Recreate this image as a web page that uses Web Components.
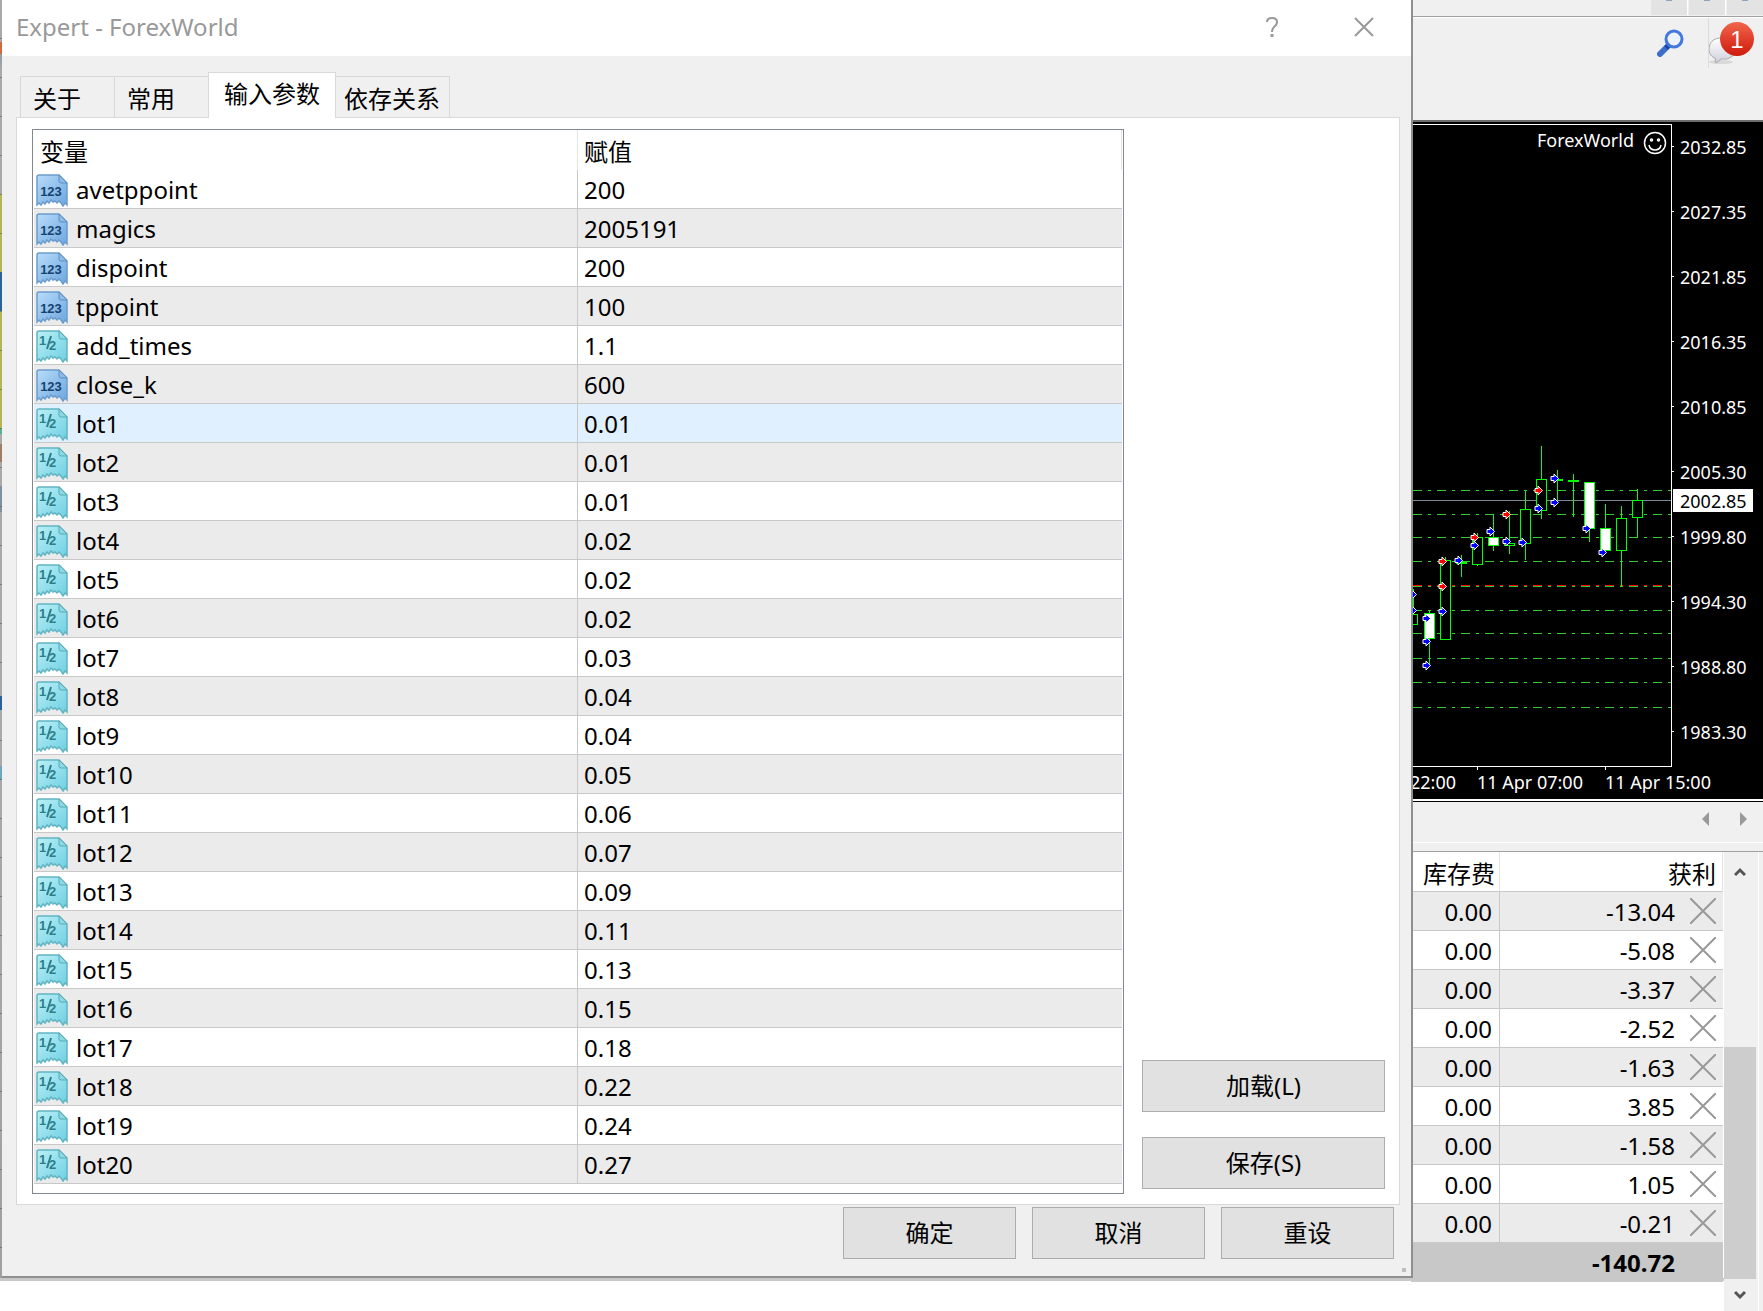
<!DOCTYPE html>
<html lang="zh-CN">
<head>
<meta charset="utf-8">
<title>Expert - ForexWorld</title>
<style>
    html, body {
        margin: 0;
        min-height: 100%;
        background: #ffffff;
    }
    body {
        position: relative;
        font-family: "Noto Sans", "Noto Sans CJK SC", sans-serif;
        font-size: 24px;
        line-height: 32px;
        color: #000000;
        overflow: hidden;
    }
    /* dialog window floating over the terminal */
    expert-dialog {
        position: absolute;
        top: 0;
        left: 2px;
        right: 350px;
    }
</style>
</head>
<body>
<terminal-window></terminal-window>
<expert-dialog caption="Expert - ForexWorld">
    <params-table></params-table>
    <win-button slot="side">加载(L)</win-button>
    <win-button slot="side">保存(S)</win-button>
    <win-button slot="footer">确定</win-button>
    <win-button slot="footer">取消</win-button>
    <win-button slot="footer">重设</win-button>
</expert-dialog>

<script>
class BaseComponent extends HTMLElement {
    constructor() {
        super();
        this.attachShadow({mode: 'open'});
    }

    connectedCallback() {
        const template = document.createElement('template');
        template.innerHTML = this.getStyle() + this.getTemplate();
        this.shadowRoot.replaceChildren(template.content.cloneNode(true));
    }
}

class WinButton extends BaseComponent {
    getTemplate() {
        return `<button type="button"><slot></slot></button>`;
    }

    getStyle() {
        return `
            <style>
                :host {
                    display: block;
                }
                button {
                    display: block;
                    box-sizing: border-box;
                    width: 100%;
                    height: 52px;
                    padding: 0;
                    border: 1px solid #adadad;
                    background: #e1e1e1;
                    color: inherit;
                    font: inherit;
                }
            </style>
        `;
    }
}

class DialogTabs extends BaseComponent {
    getTemplate() {
        return `
            <button type="button" role="tab" class="wide">关于</button>
            <button type="button" role="tab" class="wide">常用</button>
            <button type="button" role="tab" class="active" aria-selected="true">输入参数</button>
            <button type="button" role="tab">依存关系</button>
        `;
    }

    getStyle() {
        return `
            <style>
                :host {
                    display: flex;
                    align-items: flex-end;
                    padding-left: 4px;
                }
                button {
                    box-sizing: border-box;
                    height: 41px;
                    padding: 4px 9px 0 8px;
                    border: 1px solid #d9d9d9;
                    border-bottom: 0;
                    background: #f0f0f0;
                    color: inherit;
                    font: inherit;
                    line-height: 36px;
                }
                .wide {
                    padding-left: 12px;
                    padding-right: 33px;
                    border-right: 0;
                }
                .active {
                    height: 46px;
                    margin-bottom: -1px;
                    padding: 0 15px 4px;
                    background: #ffffff;
                }
                .active + button {
                    border-left: 0;
                }
            </style>
        `;
    }
}

class ParamsTable extends BaseComponent {
    get rows() {
        const lots = ['0.01', '0.01', '0.01', '0.02', '0.02', '0.02', '0.03', '0.04', '0.04', '0.05',
            '0.06', '0.07', '0.09', '0.11', '0.13', '0.15', '0.18', '0.22', '0.24', '0.27'];
        return [
            ['int', 'avetppoint', '200'],
            ['int', 'magics', '2005191'],
            ['int', 'dispoint', '200'],
            ['int', 'tppoint', '100'],
            ['double', 'add_times', '1.1'],
            ['int', 'close_k', '600'],
            ...lots.map((value, i) => ['double', 'lot' + (i + 1), value])
        ];
    }

    getIcon(type) {
        const paper = 'M1 3Q1 1 3 1H23L31 9V31L29 29L27 32L25 29L23 27L21 29L19 27L17 28L15 26L13 29L11 27L9 30L7 28L5 31L3 29L1 31Z';
        const fold = 'M23 1V7Q23 9 25 9H31Z';
        if (type === 'int') {
            return `
                <svg viewBox="0 0 33 33" aria-hidden="true">
                    <defs><linearGradient id="blue" x1="0" y1="0" x2="1" y2="1"><stop offset="0" stop-color="#b9dcfa"/><stop offset="1" stop-color="#6ca6df"/></linearGradient></defs>
                    <path d="${paper}" fill="url(#blue)" stroke="#6b9dcc" stroke-width="1.5"/>
                    <path d="${fold}" fill="#8dbbe6" stroke="#5b8fc2"/>
                    <text class="int" x="15" y="22" text-anchor="middle" fill="#16446f">123</text>
                </svg>`;
        }
        return `
            <svg viewBox="0 0 33 33" aria-hidden="true">
                <defs><linearGradient id="cyan" x1="0" y1="0" x2="1" y2="1"><stop offset="0" stop-color="#baf0f7"/><stop offset="1" stop-color="#6fcfe2"/></linearGradient></defs>
                <path d="${paper}" fill="url(#cyan)" stroke="#62b5c2" stroke-width="1.5"/>
                <path d="${fold}" fill="#8ad9e5" stroke="#55a9b5"/>
                <text x="3" y="15" fill="#2a7f8a">1</text>
                <path d="M15 6L11 19" stroke="#2a7f8a" stroke-width="2"/>
                <text x="13" y="20" fill="#2a7f8a">2</text>
            </svg>`;
    }

    getTemplate() {
        return `
            <table>
                <thead><tr><th>变量</th><th>赋值</th></tr></thead>
                <tbody>
                    ${this.rows.map(([type, name, value]) => `
                        <tr class="${name === 'lot1' ? 'hover' : ''}">
                            <td><div class="name">${this.getIcon(type)}<span>${name}</span></div></td>
                            <td>${value}</td>
                        </tr>`).join('')}
                </tbody>
            </table>
        `;
    }

    getStyle() {
        return `
            <style>
                :host {
                    display: block;
                    box-sizing: border-box;
                    padding: 0 1px 9px;
                    border: 1px solid #828790;
                    background: #ffffff;
                }
                table {
                    width: 100%;
                    table-layout: fixed;
                    border-collapse: separate;
                    border-spacing: 0;
                }
                th, td {
                    box-sizing: border-box;
                    height: 39px;
                    padding: 2px 6px 0;
                    border-right: 1px solid #c8c8c8;
                    border-bottom: 1px solid #c8c8c8;
                    text-align: left;
                    font-weight: normal;
                }
                td:last-child {
                    border-right: 0;
                }
                th {
                    height: 40px;
                    padding-top: 4px;
                    border-bottom: 0;
                    border-color: #e5e5e5;
                }
                td:first-child {
                    padding-left: 2px;
                }
                tbody tr:nth-child(even) {
                    background: #ebebeb;
                }
                tbody tr.hover {
                    background: #e0f0fe;
                }
                .name {
                    display: flex;
                    align-items: center;
                    gap: 7px;
                }
                svg {
                    width: 33px;
                    height: 33px;
                }
                text {
                    font: bold 13px "Liberation Sans", sans-serif;
                }
            </style>
        `;
    }
}

class ExpertDialog extends BaseComponent {
    getTemplate() {
        return `
            <header>
                <span class="caption">${this.getAttribute('caption')}</span>
                <button type="button" aria-label="Help"><svg viewBox="0 0 20 20"><path d="M5 5Q5 1 10 1Q15 1 15 5Q15 8 12 10Q10 12 10 15" /><path d="M10 17V20" stroke-width="3"/></svg></button>
                <button type="button" aria-label="Close"><svg viewBox="0 0 20 20"><path d="M1 1L19 19M19 1L1 19"/></svg></button>
            </header>
            <main>
                <dialog-tabs role="tablist"></dialog-tabs>
                <div class="pane">
                    <slot></slot>
                    <div class="side"><slot name="side"></slot></div>
                </div>
                <footer><slot name="footer"></slot></footer>
            </main>
            <i class="grip"></i>
        `;
    }

    getStyle() {
        return `
            <style>
                :host {
                    display: block;
                    background: #f0f0f0;
                    border-right: 2px solid #8f8f8f;
                    border-bottom: 2px solid #8f8f8f;
                }
                header {
                    box-sizing: border-box;
                    display: flex;
                    align-items: center;
                    gap: 60px;
                    height: 56px;
                    padding: 0 31px 2px 14px;
                    background: #ffffff;
                    color: #999999;
                }
                .caption {
                    flex: 1;
                }
                header button {
                    display: grid;
                    place-items: center;
                    width: 32px;
                    height: 32px;
                    padding: 0;
                    border: 0;
                    background: none;
                }
                header svg {
                    width: 20px;
                    height: 20px;
                    fill: none;
                    stroke: #999999;
                    stroke-width: 2;
                }
                main {
                    padding: 16px 11px 17px 14px;
                }
                .pane {
                    display: flex;
                    gap: 18px;
                    padding: 11px 14px 10px 15px;
                    border: 1px solid #d9d9d9;
                    background: #ffffff;
                }
                ::slotted(params-table) {
                    flex: 1;
                }
                .side {
                    display: flex;
                    flex-direction: column;
                    justify-content: flex-end;
                    gap: 25px;
                    width: 243px;
                    padding-bottom: 5px;
                }
                footer {
                    display: flex;
                    justify-content: flex-end;
                    gap: 16px;
                    padding: 2px 6px 0;
                }
                ::slotted(win-button[slot="footer"]) {
                    width: 173px;
                }
                .grip {
                    position: absolute;
                    right: 5px;
                    bottom: 4px;
                    width: 4px;
                    height: 4px;
                    background: #bfbfbf;
                }
            </style>
        `;
    }
}

class PriceChart extends BaseComponent {
    // [high, bodyTop, bodyBottom, low, bearish]
    get candles() {
        return [
            [469, 494, 504, 504, 0], [490, 493, 518, 544, 1], [437, 440, 519, 519, 0],
            [435, 442, 443, 456, 0], [413, 417, 444, 445, 0], [394, 417, 425, 430, 1],
            [391, 423, 425, 433, 0], [370, 389, 423, 439, 0], [326, 359, 390, 398, 0],
            [350, 359, 360, 383, 0], [354, 360, 361, 396, 0], [362, 362, 408, 421, 1],
            [384, 408, 430, 433, 1], [386, 398, 430, 466, 0], [369, 380, 397, 417, 0]
        ];
    }

    get arrows() {
        const red = [[31, 441], [31, 466], [63, 417], [95, 394], [127, 370]];
        const blue = [[1, 474], [1, 490], [15, 498], [15, 521], [15, 545], [31, 491], [47, 440],
            [63, 425], [79, 411], [95, 421], [111, 422], [127, 388], [143, 358], [143, 382],
            [175, 408], [191, 432]];
        return [...red.map(p => [...p, '#ff0000']), ...blue.map(p => [...p, '#0000ff'])];
    }

    getTemplate() {
        const prices = ['2032.85', '2027.35', '2021.85', '2016.35', '2010.85', '2005.30', '1999.80',
            '1994.30', '1988.80', '1983.30'];
        const levels = [370, 394, 417, 441, 466, 490, 513, 538, 562, 587];
        return `
            <svg viewBox="0 0 352 677" shape-rendering="crispEdges">
                <g transform="translate(0 -2)" fill="none">
                    <path d="M0 4.5H260.5V646.5H0M66.5 646V650M194.5 646V650" stroke="#ffffff"/>
                    <g stroke="#32cd32" stroke-dasharray="9 6 3 6">
                        ${levels.map(y => `<path d="M2 ${y}.5H260"/>`).join('')}
                        <path d="M2 465.5H260" stroke="#ff0000"/>
                    </g>
                    <path d="M0 380.5H260" stroke="#778899"/>
                    ${this.candles.map(([high, top, bottom, low, bearish], i) => {
                        const x = 2 + i * 16;
                        return `<path d="M${x}.5 ${high}V${top}M${x}.5 ${bottom}V${low + 1}" stroke="#00ff00"/>
                            <rect x="${x - 5}.5" y="${top}.5" width="10" height="${bottom - top}" stroke="#00ff00" fill="${bearish ? '#ffffff' : '#000000'}"/>`;
                    }).join('')}
                    ${this.arrows.map(([x, y, color]) => `
                        <path transform="translate(${x} ${y})" d="M-3 -1.500H0V-4L4.500 .5L0 5V2.500H-3Z" fill="${color}" stroke="#ffffff" shape-rendering="auto"/>`).join('')}
                    ${prices.map((price, i) => `
                        <path d="M261 ${26 + i * 65}.5H263" stroke="#ffffff"/>
                        <text x="269" y="${34 + i * 65}">${price}</text>`).join('')}
                    <rect x="262" y="369" width="80" height="23" fill="#ffffff"/>
                    <text x="269" y="388" style="fill:#000000">2002.85</text>
                    <text x="-1" y="669">22:00</text>
                    <text x="66" y="669">11 Apr 07:00</text>
                    <text x="194" y="669">11 Apr 15:00</text>
                    <text x="223" y="27" text-anchor="end">ForexWorld</text>
                    <g stroke="#ffffff" stroke-width="1.5" shape-rendering="auto">
                        <circle cx="244" cy="23" r="10.5"/>
                        <path d="M238 25Q239 30 244 30Q249 30 250 25"/>
                        <circle cx="240.5" cy="20" r="1"/>
                        <circle cx="247.5" cy="20" r="1"/>
                    </g>
                </g>
            </svg>
        `;
    }

    getStyle() {
        return `
            <style>
                :host {
                    display: block;
                    border-top: 2px solid #6e6e6e;
                    background: #000000;
                }
                svg {
                    display: block;
                    width: 352px;
                    height: 677px;
                }
                text {
                    fill: #ffffff;
                    font-size: 18px;
                }
            </style>
        `;
    }
}

class TradesTable extends BaseComponent {
    getTemplate() {
        const profits = ['-13.04', '-5.08', '-3.37', '-2.52', '-1.63', '3.85', '-1.58', '1.05', '-0.21'];
        return `
            <table>
                <colgroup><col class="col-swap"><col><col class="col-close"></colgroup>
                <thead><tr><th class="swap">库存费</th><th colspan="2">获利</th></tr></thead>
                <tbody>
                    ${profits.map(profit => `
                        <tr>
                            <td class="swap">0.00</td>
                            <td>${profit}</td>
                            <td class="close"><button type="button" aria-label="Close"><svg viewBox="0 0 26 26"><path d="M0 0L26 26M26 0L0 26"/></svg></button></td>
                        </tr>`).join('')}
                </tbody>
                <tfoot><tr><td></td><td>-140.72</td><td></td></tr></tfoot>
            </table>
            <div class="scroll">
                <button type="button" aria-label="Up"><svg viewBox="0 0 12 10"><path d="M1 8L6 3L11 8"/></svg></button>
                <div class="track"><div class="thumb"></div></div>
                <button type="button" aria-label="Down"><svg viewBox="0 0 12 10"><path d="M1 2L6 7L11 2"/></svg></button>
            </div>
        `;
    }

    getStyle() {
        return `
            <style>
                :host {
                    display: flex;
                    align-items: flex-start;
                    border-top: 1px solid #a0a0a0;
                }
                table {
                    width: 312px;
                    table-layout: fixed;
                    border-collapse: separate;
                    border-spacing: 0;
                }
                .col-swap {
                    width: 89px;
                }
                .col-close {
                    width: 48px;
                }
                th, td {
                    box-sizing: border-box;
                    height: 39px;
                    padding: 2px 0 0;
                    border-bottom: 1px solid #c8c8c8;
                    text-align: right;
                    font-weight: normal;
                }
                th {
                    height: 40px;
                    padding: 4px 6px 0 0;
                    border-right: 1px solid #e5e5e5;
                }
                th.swap {
                    padding-right: 4px;
                }
                td.swap {
                    padding-right: 7px;
                    border-right: 1px solid #c8c8c8;
                }
                td.close {
                    padding: 0 7px 0 0;
                }
                tbody tr:nth-child(odd) {
                    background: #ebebeb;
                }
                tfoot td {
                    background: #c8c8c8;
                    font-weight: bold;
                }
                button {
                    padding: 0;
                    border: 0;
                    background: none;
                }
                .close button {
                    display: block;
                    margin-left: auto;
                }
                .close svg {
                    display: block;
                    width: 26px;
                    height: 26px;
                    stroke: #999999;
                    stroke-width: 2;
                }
                .scroll {
                    box-sizing: border-box;
                    display: flex;
                    flex-direction: column;
                    width: 35px;
                    height: calc(100vh - 852px);
                    margin-left: 1px;
                    padding-right: 2px;
                    background: #f0f0f0;
                    border-right: 1px solid #ffffff;
                }
                .scroll button {
                    height: 32px;
                }
                .scroll button:first-child {
                    height: 40px;
                }
                .scroll svg {
                    width: 12px;
                    height: 10px;
                    fill: none;
                    stroke: #555555;
                    stroke-width: 3;
                }
                .track {
                    display: flex;
                    flex: 1;
                    align-items: flex-end;
                }
                .thumb {
                    width: 100%;
                    height: 60%;
                    background: #cdcdcd;
                }
            </style>
        `;
    }
}

class TerminalWindow extends BaseComponent {
    getTemplate() {
        return `
            <div class="edge"></div>
            <div class="right">
                <div class="mdi"><i></i><i></i><i></i></div>
                <div class="toolbar">
                    <button type="button" aria-label="Search">
                        <svg width="28" height="28" viewBox="0 0 28 28" fill="none">
                            <path d="M3 25L11 17" stroke="#3c6fca" stroke-width="6" stroke-linecap="round"/>
                            <path d="M9 19L12 16" stroke="#1b46a8" stroke-width="5"/>
                            <circle cx="17" cy="10" r="8" fill="#eef3fb" stroke="#4378df" stroke-width="3"/>
                        </svg>
                    </button>
                    <button type="button" class="news" aria-label="Messages">
                        <svg width="54" height="50" viewBox="0 0 54 50">
                            <defs>
                                <linearGradient id="bubble" x1="0" y1="0" x2="0" y2="1"><stop offset="0" stop-color="#ffffff"/><stop offset="1" stop-color="#cfcfdc"/></linearGradient>
                                <linearGradient id="badge" x1="0" y1="0" x2="0" y2="1"><stop offset="0" stop-color="#f0654a"/><stop offset="1" stop-color="#cf1a0c"/></linearGradient>
                            </defs>
                            <ellipse cx="12" cy="44" rx="12" ry="2" fill="#d8d8d8"/>
                            <path d="M12 20C4 20 0 25 0 31C0 36 3 39 6 40L7 45L12 41H18C24 39 27 35 27 31C27 24 20 20 12 20Z" fill="url(#bubble)" stroke="#aaaaaa"/>
                            <circle cx="28" cy="21" r="17" fill="url(#badge)"/>
                            <text x="28" y="30" text-anchor="middle">1</text>
                        </svg>
                    </button>
                </div>
                <price-chart></price-chart>
                <div class="pager">
                    <svg width="45" height="14" viewBox="0 0 45 14"><path d="M7 0V14L0 7ZM38 0V14L45 7Z" fill="#999999"/></svg>
                </div>
                <trades-table></trades-table>
            </div>
        `;
    }

    getStyle() {
        return `
            <style>
                :host {
                    display: flex;
                    justify-content: space-between;
                    background: linear-gradient(transparent 1278px, #c8c8c8 1278px, #c8c8c8 1281px, transparent 1281px);
                }
                /* sliver of the window behind the dialog */
                .edge {
                    width: 2px;
                    height: 1278px;
                    background:
                        repeating-linear-gradient(transparent 0, transparent 38px, rgba(80, 80, 80, .5) 38px, rgba(80, 80, 80, .5) 39px),
                        linear-gradient(#a9a9a9 42px, #d06a40 42px, #d06a40 54px, #8f9aa3 54px, #a9a9a9 70px,
                            #a9a9a9 194px, #b5b456 194px, #b5b456 272px, #2a6399 272px, #2a6399 311px,
                            #b5b456 311px, #b5b456 428px, #5fae8c 428px, #5fae8c 434px, #a9a9a9 434px,
                            #a9a9a9 444px, #a07c62 444px, #a07c62 462px, #a9a9a9 462px, #a9a9a9 486px,
                            #7f8f9f 486px, #7f8f9f 512px, #a9a9a9 512px, #a9a9a9 696px, #2a6399 696px,
                            #2a6399 710px, #a9a9a9 710px, #a9a9a9 766px, #6fa5bd 766px, #6fa5bd 780px,
                            #a9a9a9 780px, #a0a0a0);
                }
                .right {
                    width: 352px;
                    background: linear-gradient(90deg, transparent 348px, #f0f0f0 348px);
                }
                .mdi {
                    display: flex;
                    justify-content: flex-end;
                    gap: 2px;
                    height: 15px;
                    padding-bottom: 1px;
                    border-bottom: 1px solid #a0a0a0;
                    background: #f0f0f0;
                }
                .mdi i {
                    width: 36px;
                    background: linear-gradient(90deg, transparent 15px, #8fa3bf 15px, #8fa3bf 21px, transparent 21px) top / 100% 1px no-repeat #e3e3e3;
                    box-shadow: 1px 0 #ffffff;
                }
                .toolbar {
                    box-sizing: border-box;
                    display: flex;
                    justify-content: flex-end;
                    gap: 23px;
                    height: 103px;
                    border-top: 1px solid #ffffff;
                    background: #f0f0f0;
                }
                .toolbar button {
                    height: 50px;
                    padding: 0;
                    border: 0;
                    background: none;
                }
                .toolbar svg {
                    display: block;
                }
                .toolbar .news {
                    border-left: 1px solid #dcdcdc;
                }
                text {
                    fill: #ffffff;
                    font-size: 24px;
                }
                .pager {
                    box-sizing: border-box;
                    display: flex;
                    align-items: center;
                    justify-content: flex-end;
                    height: 42px;
                    padding: 0 16px 6px 0;
                    margin-bottom: 8px;
                    border-top: 1px solid #000000;
                    border-bottom: 1px solid #ffffff;
                    background: #f0f0f0;
                    box-shadow: 0 8px #f0f0f0;
                }
                price-chart {
                    border-bottom: 2px solid #ffffff;
                }
            </style>
        `;
    }
}

customElements.define('win-button', WinButton);
customElements.define('dialog-tabs', DialogTabs);
customElements.define('params-table', ParamsTable);
customElements.define('price-chart', PriceChart);
customElements.define('trades-table', TradesTable);
customElements.define('terminal-window', TerminalWindow);
customElements.define('expert-dialog', ExpertDialog);
</script>
</body>
</html>
